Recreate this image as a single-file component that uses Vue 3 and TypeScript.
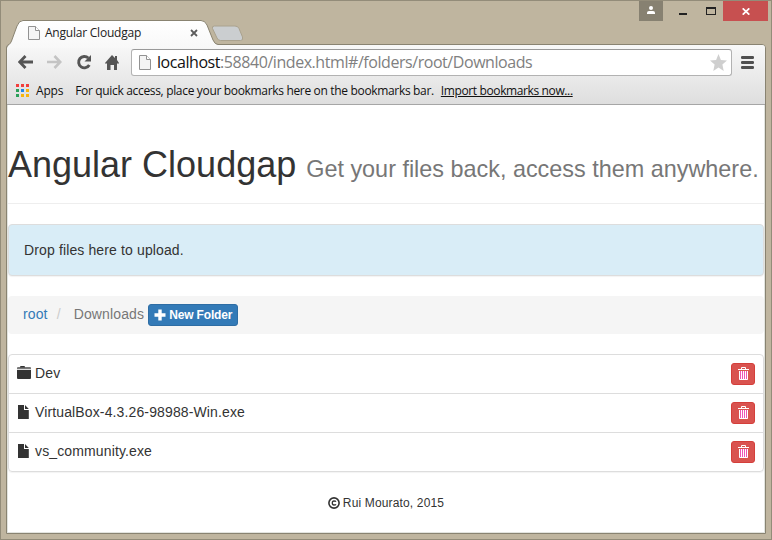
<script setup lang="ts">
interface Entry {
  name: string
  kind: 'folder' | 'file'
}

const entries: Entry[] = [
  { name: 'Dev', kind: 'folder' },
  { name: 'VirtualBox-4.3.26-98988-Win.exe', kind: 'file' },
  { name: 'vs_community.exe', kind: 'file' },
]

const appColors: string[] = [
  '#f23f3c', '#f23f3c', '#f23f3c',
  '#2ba05a', '#1e88e8', '#f7b50c',
  '#2ba05a', '#f7b50c', '#f7b50c',
]
</script>

<template>
  <div class="window">
    <header class="titlebar">
      <div class="tab">
        <svg class="tab-shape" width="212" height="28" viewBox="0 0 212 28">
          <defs>
            <linearGradient id="tabFill" x1="0" y1="0" x2="0" y2="1">
              <stop offset="0" stop-color="#ffffff" />
              <stop offset="1" stop-color="#f8f8f8" />
            </linearGradient>
          </defs>
          <path d="M1 28V26.500Q4 25 5.500 21L11 6Q13 .5 17 .5H195Q199 .5 201 5L207 20Q209 24.500 212 24.500V28Z" fill="url(#tabFill)" />
          <path d="M.5 28Q1 25.500 3 24.500Q4.500 23.500 5.500 21L11 6Q13 .5 17 .5H195Q199 .5 201 5L207 20Q209 24.500 212 24.500" fill="none" stroke="#898371" />
        </svg>
        <svg class="tab-page" width="12" height="14" viewBox="0 0 12 14">
          <path d="M.5.5H7.500L11.500 4.500V13.500H.5Z" fill="#f4f4f4" stroke="#929292" />
          <path d="M7.500.5V4.500H11.500" fill="#fff" stroke="#929292" />
        </svg>
        <span class="tab-title">Angular Cloudgap</span>
        <svg class="tab-close" width="8" height="8" viewBox="0 0 8 8">
          <path d="M1 1L7 7M7 1L1 7" stroke="#5c5c5c" stroke-width="1.8" />
        </svg>
      </div>
      <svg class="new-tab" width="34" height="17" viewBox="0 0 34 17">
        <path d="M3.500 1H24Q27 1 28 3.500L31.500 12Q32.500 15.500 29.500 15.500H9.500Q7 15.500 6 13L1.500 3.500Q.7 1 3.500 1Z" fill="#cbced0" stroke="#aaa28e" />
      </svg>
      <div class="controls">
        <span class="user">
          <svg width="8" height="8" viewBox="0 0 8 8"><circle cx="4" cy="2" r="2" fill="#fff" /><path d="M0 8V7Q0 5 2 5H6Q8 5 8 7V8Z" fill="#fff" /></svg>
        </span>
        <span class="minimize"><svg width="8" height="2"><path d="M0 0H8V2H0Z" fill="#222" /></svg></span>
        <span class="maximize"><svg width="10" height="8"><path d="M0 0H10V8H0ZM1 2V7H9V2Z" fill="#222" fill-rule="evenodd" /></svg></span>
        <span class="close"><svg width="8" height="7" viewBox="0 0 8 7"><path d="M.7.300L7.300 6.700M7.300.300L.7 6.700" stroke="#fff" stroke-width="1.7" /></svg></span>
      </div>
    </header>

    <div class="frame">
      <div class="chrome">
        <nav class="toolbar">
          <svg class="nav-icon back" width="15" height="14" viewBox="0 0 15 14"><path d="M7.500 1L1.700 7L7.500 13M2 7H15" fill="none" stroke="#555" stroke-width="2.800" /></svg>
          <svg class="nav-icon forward" width="15" height="14" viewBox="0 0 15 14"><path d="M7.500 1L13.300 7L7.500 13M13 7H0" fill="none" stroke="#c4c4c4" stroke-width="2.600" /></svg>
          <svg class="nav-icon reload" width="16" height="16" viewBox="0 0 16 16"><path d="M12.300 4A5.700 5.700 0 1 0 13.300 11" fill="none" stroke="#555" stroke-width="2.900" /><path d="M15 1V7.500H8.500Z" fill="#555" /></svg>
          <svg class="nav-icon home" width="14" height="15" viewBox="0 0 14 15"><path d="M7 0L10 3V1H12V5L14 8V8.500H12V15H9V10H5.500V15H2V8.500H0V8Z" fill="#555" /></svg>
          <div class="address">
            <svg width="12" height="15" viewBox="0 0 12 15">
              <path d="M.5.5H7.500L11.500 4.500V14.500H.5Z" fill="#f4f4f4" stroke="#929292" />
              <path d="M7.500.5V4.500H11.500" fill="#fff" stroke="#929292" />
            </svg>
            <span class="url"><span class="host">localhost</span>:58840/index.html#/folders/root/Downloads</span>
            <svg class="star" width="17" height="17" viewBox="0 0 17 17"><path d="M8.500 0L10.900 5.900L17 6.500L12.400 10.500L13.700 17L8.500 13.500L3.300 17L4.600 10.500L0 6.500L6.100 5.900Z" fill="#cfcfcf" /></svg>
          </div>
          <svg class="menu" width="13" height="13" viewBox="0 0 13 13"><path d="M1.200 1.500H11.800M1.200 6.500H11.800M1.200 11.500H11.800" stroke="#505050" stroke-width="2.800" stroke-linecap="round" /></svg>
        </nav>
        <div class="bookmarks">
          <span class="apps-grid"><i v-for="(color, i) in appColors" :key="i" :style="{ background: color }"></i></span>
          <span class="apps-label">Apps</span>
          <span class="hint">For quick access, place your bookmarks here on the bookmarks bar.</span>
          <span class="import">Import bookmarks now...</span>
        </div>
      </div>

      <main class="page">
        <div class="page-header">
          <h1>Angular Cloudgap <small>Get your files back, access them anywhere.</small></h1>
        </div>
        <section class="dropzone">Drop files here to upload.</section>
        <div class="breadcrumb">
          <a class="root">root</a><span class="slash">/</span><span class="current">Downloads</span>
          <button class="new-folder">
            <svg width="12" height="12" viewBox="0 0 12 12"><path d="M4.300 .5H7.700V4.300H11.500V7.700H7.700V11.500H4.300V7.700H.5V4.300H4.300Z" fill="#fff" /></svg>
            <span>New Folder</span>
          </button>
        </div>
        <ul class="list">
          <li v-for="entry in entries" :key="entry.name">
            <svg v-if="entry.kind === 'folder'" class="entry-icon" width="15" height="14" viewBox="0 0 15 14">
              <path d="M0 4H14V12Q14 13 13 13H1Q0 13 0 12Z" fill="#333" /><path d="M0 3.200V2Q0 1 1 1H13Q14 1 14 2V3.200Z" fill="#777" /><path d="M3 1Q3 0 4 0H7Q8 0 8 1V1.500H3Z" fill="#333" />
            </svg>
            <svg v-else class="entry-icon" width="15" height="14" viewBox="0 0 15 14">
              <path d="M1 0H7V5H11.800V14H1Z" fill="#333" /><path d="M8 0L11.800 4H8Z" fill="#333" />
            </svg>
            <span class="entry-name">{{ entry.name }}</span>
            <button class="delete">
              <svg width="11" height="13" viewBox="0 0 11 13">
                <path d="M1 4H10V13H1Z" fill="#ef54b8" />
                <path d="M0 2.500H11M3.500 2V.5H7.500V2M1.500 4V12.500H9.500V4M3.500 4V12M5.500 4V12M7.500 4V12" fill="none" stroke="#fff" />
              </svg>
            </button>
          </li>
        </ul>
        <footer>
          <svg width="12" height="12" viewBox="0 0 12 12"><circle cx="6" cy="6" r="5.100" fill="none" stroke="#333" stroke-width="1.600" /><path d="M8 4.700Q7.500 4 6 4Q4.300 4 4.300 6Q4.300 8 6 8Q7.500 8 8 7.300" fill="none" stroke="#333" stroke-width="1.300" /></svg>
          <span>Rui Mourato, 2015</span>
        </footer>
      </main>
    </div>
  </div>
</template>

<style>
body {
  margin: 0;
  overflow: hidden;
}
</style>

<style scoped>
* {
  box-sizing: border-box;
}
.window {
  width: 772px;
  height: 540px;
  display: flex;
  flex-direction: column;
  padding: 0 5px 5px 5px;
  background: #bfb59f;
  border: 1px solid #938c79;
  font-family: "Liberation Sans", Arial, sans-serif;
  white-space: nowrap;
}
svg {
  display: block;
  flex: none;
}
.titlebar {
  height: 43px;
  flex: none;
  display: flex;
  align-items: flex-start;
}
.tab {
  position: relative;
  z-index: 1;
  width: 206px;
  height: 28px;
  margin-top: 19px;
  display: flex;
  align-items: center;
  padding: 0 9px 3px 22px;
}
.tab-shape {
  position: absolute;
  left: 0;
  top: 0;
}
.tab-page,
.tab-title,
.tab-close {
  position: relative;
}
.tab-title {
  margin-left: 5px;
  font: 12px "Open Sans", sans-serif;
  letter-spacing: -0.22px;
  color: #222;
}
.tab-close {
  margin-left: auto;
  margin-right: 5px;
}
.new-tab {
  margin: 24px 0 0 -1px;
}
.controls {
  margin-left: auto;
  margin-right: -2px;
  display: flex;
}
.controls span {
  height: 20px;
  display: flex;
  align-items: center;
  justify-content: center;
}
.user {
  width: 24px;
  padding-bottom: 3px;
  background: #878171;
}
.minimize {
  width: 32px;
  margin-left: 4px;
  padding-top: 6px;
}
.maximize {
  width: 23px;
  margin-right: 1px;
}
.close {
  width: 45px;
  padding-top: 1px;
  background: #c75050;
}
.frame {
  flex: 1;
  display: flex;
  flex-direction: column;
  padding: 0 1px 1px;
  border: 1px solid #898371;
  border-radius: 4px 4px 0 0;
  background: #e2e4df;
}
.chrome {
  height: 60px;
  flex: none;
  margin: 0 -1px;
  padding: 0 1px;
  border-bottom: 1px solid #a6a6a6;
  border-radius: 3px 3px 0 0;
  background: linear-gradient(#f8f8f8, #dedede);
}
.toolbar {
  display: flex;
  align-items: center;
  height: 34px;
}
.back {
  margin-left: 10px;
}
.forward {
  margin-left: 14px;
}
.reload {
  margin-left: 14px;
}
.home {
  margin-left: 13px;
}
.address {
  width: 601px;
  height: 27px;
  margin-left: 12px;
  padding: 0 4px 0 7px;
  display: flex;
  align-items: center;
  background: #fff;
  border: 1px solid #b2b2b2;
  border-top-color: #999;
  border-radius: 3px;
}
.url {
  margin-left: 6px;
  font: 16px "Open Sans", sans-serif;
  letter-spacing: -0.44px;
  color: #808080;
}
.host {
  color: #111;
}
.star {
  margin-left: auto;
}
.menu {
  margin-left: 9px;
}
.bookmarks {
  height: 25px;
  display: flex;
  align-items: center;
  padding: 0 0 3px 8px;
  font: 12px "Open Sans", sans-serif;
  color: #111;
}
.apps-grid {
  display: grid;
  grid-template-columns: repeat(3, 3px);
  grid-auto-rows: 3px;
  gap: 2px;
}
.apps-label {
  margin-left: 7px;
  letter-spacing: -0.2px;
}
.hint {
  margin-left: 12px;
  letter-spacing: -0.33px;
}
.import {
  margin-left: 7px;
  letter-spacing: -0.38px;
  text-decoration: underline;
}
.page {
  flex: 1;
  display: flex;
  flex-direction: column;
  background: #fff;
  font-size: 14px;
  line-height: 20px;
  letter-spacing: 0.13px;
  color: #333;
}
.page-header {
  height: 59px;
  margin-top: 40px;
  margin-bottom: 20px;
  border-bottom: 1px solid #eee;
  letter-spacing: 0;
}
h1 {
  margin: 0;
  font-size: 36px;
  font-weight: 400;
  line-height: 40px;
}
small {
  font-size: 23.400px;
  color: #777;
}
.dropzone {
  height: 52px;
  flex: none;
  padding: 15px;
  background: #d9edf7;
  border: 1px solid #ddd;
  border-radius: 4px;
  box-shadow: 0 1px 1px rgba(0, 0, 0, 0.05);
}
.breadcrumb {
  height: 38px;
  margin-top: 20px;
  padding: 0 15px;
  display: flex;
  align-items: center;
  background: #f5f5f5;
  border-radius: 4px;
}
.breadcrumb > a,
.breadcrumb > span {
  padding-bottom: 2px;
}
.root {
  color: #337ab7;
}
.slash {
  margin: 0 13px 0 9px;
  color: #ccc;
}
.current {
  color: #777;
}
.new-folder {
  width: 90px;
  height: 22px;
  margin-left: 4px;
  padding: 0 0 0 5px;
  display: flex;
  align-items: center;
  gap: 3px;
  border: 1px solid #2e6da4;
  border-radius: 3px;
  background: #337ab7;
  color: #fff;
  font: bold 12px "Liberation Sans", Arial, sans-serif;
  letter-spacing: -0.15px;
}
.list {
  margin: 20px 0 0;
  padding: 0;
  list-style: none;
  border: 1px solid #ddd;
  border-radius: 4px;
  box-shadow: 0 1px 1px rgba(0, 0, 0, 0.05);
}
.list li {
  height: 39px;
  display: flex;
  align-items: center;
  padding: 0 8px;
  border-bottom: 1px solid #ddd;
}
.list li:last-child {
  height: 38px;
  border-bottom: 0;
}
.entry-icon {
  margin: 0 3px 2px 0;
}
.entry-name {
  padding-bottom: 2px;
}
.delete {
  width: 24px;
  height: 22px;
  margin-left: auto;
  padding: 0 0 2px 1px;
  display: flex;
  align-items: center;
  justify-content: center;
  border: 1px solid #d43f3a;
  border-radius: 3px;
  background: #d9534f;
}
footer {
  margin-top: 21px;
  display: flex;
  align-items: center;
  justify-content: center;
  gap: 3px;
  font-size: 12px;
  letter-spacing: 0.15px;
}
</style>
